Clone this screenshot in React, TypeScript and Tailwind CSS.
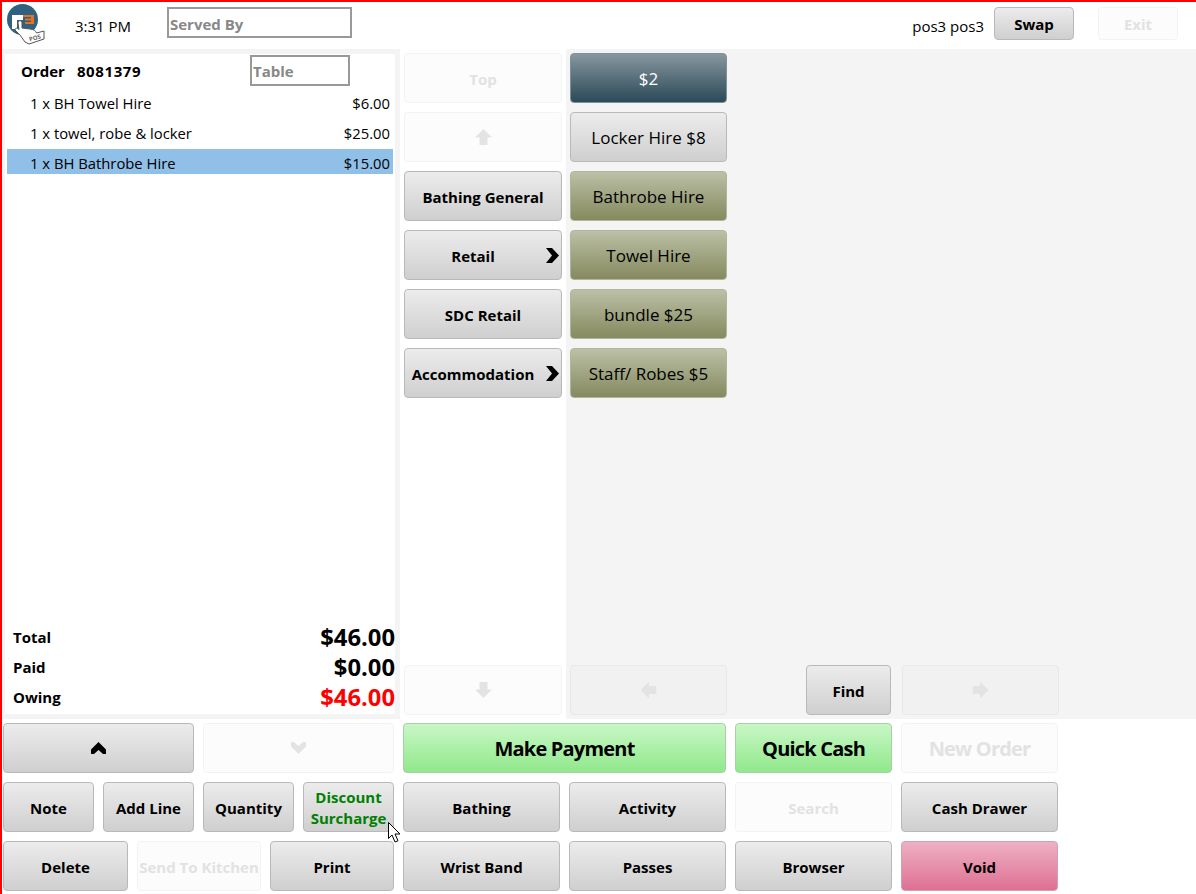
import type { ReactNode } from 'react'

type Kind = 'grey' | 'off' | 'green' | 'pink' | 'slate' | 'olive'

const kinds: Record<Kind, string> = {
  grey: 'border-[#b9b9b9] bg-gradient-to-b from-[#ececec] to-[#cfcfcf] text-black',
  off: 'border-black/[0.04] bg-black/[0.01] text-[#e2e2e2]',
  green: 'border-[#a9cfa6] bg-gradient-to-b from-[#c8f7c5] to-[#90e88c] text-black',
  pink: 'border-[#d0a0b0] bg-gradient-to-b from-[#eeb0c4] to-[#dd7093] text-black',
  slate: 'border-[#7f9098] bg-gradient-to-b from-[#87979f] to-[#2c4a58] text-white',
  olive: 'border-[#b1b59b] bg-gradient-to-b from-[#bcc0a6] to-[#858a5f] text-black',
}

function Btn({ kind = 'grey', className = '', children }: { kind?: Kind; className?: string; children?: ReactNode }) {
  return (
    <div className={`relative flex h-[50px] items-center justify-center rounded-[4px] border pt-[2px] text-center text-[15px] leading-[21px] font-bold ${kinds[kind]} ${className}`}>
      {children}
    </div>
  )
}

function ItemBtn({ kind, children }: { kind: Kind; children: ReactNode }) {
  return (
    <Btn kind={kind} className="w-[157px] !pt-0 !text-[17px] !font-normal">
      {children}
    </Btn>
  )
}

// block arrow, pointing up before rotation
function BlockArrow({ className }: { className: string }) {
  return (
    <svg viewBox="0 0 17 16" className={`h-[16px] w-[17px] fill-[#e3e3e3] ${className}`}>
      <path d="M8.5 0 L17 8.5 H12.5 V16 H4.5 V8.5 H0 Z" />
    </svg>
  )
}

function Chevron({ className, fill }: { className: string; fill: string }) {
  return (
    <svg viewBox="0 0 15 12" className={`h-[12px] w-[15px] ${fill} ${className}`}>
      <path d="M7.5 0 L15 7.5 V12 H12 L7.5 8 L3 12 H0 V7.5 Z" />
    </svg>
  )
}

function SideArrow() {
  return (
    <svg viewBox="0 0 13 15" className="absolute top-[17px] right-[2px] h-[15px] w-[13px]">
      <path d="M0 0 H6 L13 7.5 L6 15 H0 L6 7.5 Z" fill="#000" />
    </svg>
  )
}

function Logo() {
  return (
    <svg viewBox="0 0 40 42" className="h-[42px] w-[40px]">
      <circle cx="15.5" cy="15.5" r="15.5" fill="#2f6180" />
      <path d="M5 25 V11 H16 V16 H10 V25 Z" fill="#fff" />
      <path d="M16 11 H27 V20 H18 V18 H24 V16.5 H18 V14.5 H24 V13 H16 Z" fill="#e8701f" />
      <path d="M11 19 C11 16 15 16 15 19 V24 L23 25 C27 25.5 29 27 29.5 29 L37 27 V35 L22 40 L18 38 L13 31 L8 26 C8 24 10 23.5 12 25.5 Z" fill="#fff" stroke="#555" strokeWidth="1" />
      <text x="22" y="36" fontSize="6" fontWeight="700" fill="#666" transform="rotate(-16 28 34)" fontFamily="Open Sans, sans-serif">POS</text>
    </svg>
  )
}

function MouseCursor() {
  return (
    <svg viewBox="0 0 13 21" className="absolute top-[39px] left-[84px] h-[21px] w-[13px] overflow-visible">
      <path d="M0.5 0.5 V16.5 L4 13 L7 20 L10 18.8 L7 12 H12 Z" fill="#fff" stroke="#000" strokeWidth="1" />
    </svg>
  )
}

function TotalRow({ label, value, red }: { label: string; value: string; red?: boolean }) {
  return (
    <div className="flex h-[30px] items-center justify-between pl-[8px]">
      <span className="mb-[2px] text-[15px] font-bold">{label}</span>
      <span className={`text-[23.8px] font-bold ${red ? 'text-[#ff0000]' : 'text-black'}`}>{value}</span>
    </div>
  )
}

export default function App() {
  const lines = [
    ['1 x BH Towel Hire', '$6.00'],
    ['1 x towel, robe & locker', '$25.00'],
    ['1 x BH Bathrobe Hire', '$15.00'],
  ]

  return (
    <div className="h-[894px] w-[1196px] overflow-hidden border-t-2 border-l-2 border-[#ff0000] bg-white font-['Open_Sans',sans-serif] text-black">
      {/* Top bar */}
      <div className="flex h-[47px] items-start">
        <div className="mt-[2px] ml-[5px] h-[42px] w-[40px]"><Logo /></div>
        <span className="mt-[13px] ml-[28px] w-[92px] text-[15px]">3:31 PM</span>
        <div className="mt-[5px] flex h-[31px] w-[185px] items-center border-2 border-[#999] pt-[4px] pl-[1px] text-[15px] font-bold text-[#888]">Served By</div>
        <span className="mt-[13px] mr-[10px] ml-auto text-[15px]">pos3 pos3</span>
        <Btn className="mt-[5px] !h-[33px] w-[80px]">Swap</Btn>
        <Btn kind="off" className="mt-[5px] mr-[18px] ml-[24px] !h-[33px] w-[80px]">Exit</Btn>
      </div>

      <div className="flex h-[670px]">
        {/* Order panel */}
        <div className="flex w-[398px] bg-[#f4f4f4] pt-[5px] pr-[5px] pb-[5px] pl-[3px]">
          <div className="flex w-[390px] flex-col justify-between bg-white">
            <div>
              <div className="flex h-[35px] items-start">
                <span className="mt-[6px] ml-[16px] w-[229px] text-[15px] font-bold">
                  Order<span className="ml-[12px] tracking-[0.6px]">8081379</span>
                </span>
                <div className="mt-[1px] flex h-[31px] w-[100px] items-center border-2 border-[#999] pt-[2px] pl-[1px] text-[15px] font-bold text-[#888]">Table</div>
              </div>
              <div className="flex flex-col gap-[5px] px-[2px]">
                {lines.map(([name, price], i) => (
                  <div key={name} className={`flex h-[25px] items-center justify-between pt-[3px] pr-[3px] pl-[23px] text-[14.8px] ${i === 2 ? 'bg-[#90bfe8]' : ''}`}>
                    <span>{name}</span>
                    <span>{price}</span>
                  </div>
                ))}
              </div>
            </div>
            <div className="pb-[1px]">
              <TotalRow label="Total" value="$46.00" />
              <TotalRow label="Paid" value="$0.00" />
              <TotalRow label="Owing" value="$46.00" red />
            </div>
          </div>
        </div>

        {/* Category column */}
        <div className="flex w-[166px] flex-col justify-between pt-[4px] pb-[4px] pl-[4px]">
          <div className="flex w-[158px] flex-col gap-[9px]">
            <Btn kind="off">Top</Btn>
            <Btn kind="off" className="!pt-0"><BlockArrow className="" /></Btn>
            <Btn>Bathing General</Btn>
            <Btn className="pr-[20px]">Retail<SideArrow /></Btn>
            <Btn>SDC Retail</Btn>
            <Btn className="pr-[20px]">Accommodation<SideArrow /></Btn>
          </div>
          <Btn kind="off" className="w-[158px] !pt-0"><BlockArrow className="rotate-180" /></Btn>
        </div>

        {/* Item grid */}
        <div className="flex flex-1 flex-col justify-between bg-[#f4f4f4] pt-[4px] pb-[4px] pl-[4px]">
          <div className="flex flex-col gap-[9px]">
            <ItemBtn kind="slate">$2</ItemBtn>
            <ItemBtn kind="grey">Locker Hire $8</ItemBtn>
            <ItemBtn kind="olive">Bathrobe Hire</ItemBtn>
            <ItemBtn kind="olive">Towel Hire</ItemBtn>
            <ItemBtn kind="olive">bundle $25</ItemBtn>
            <ItemBtn kind="olive">Staff/ Robes $5</ItemBtn>
          </div>
          <div className="flex">
            <Btn kind="off" className="w-[157px] !pt-0"><BlockArrow className="-rotate-90" /></Btn>
            <Btn className="ml-[79px] w-[85px]">Find</Btn>
            <Btn kind="off" className="ml-[11px] w-[157px] !pt-0"><BlockArrow className="rotate-90" /></Btn>
          </div>
        </div>
      </div>

      {/* Bottom buttons */}
      <div className="flex gap-[9px] pt-[4px] pl-[1px]">
        <div className="flex w-[391px] flex-col gap-[9px]">
          <div className="flex gap-[9px]">
            <Btn className="w-[191px] !pt-0"><Chevron className="" fill="fill-black" /></Btn>
            <Btn kind="off" className="w-[191px] !pt-0"><Chevron className="rotate-180" fill="fill-[#e3e3e3]" /></Btn>
          </div>
          <div className="flex gap-[9px]">
            <Btn className="w-[91px]">Note</Btn>
            <Btn className="w-[91px]">Add Line</Btn>
            <Btn className="w-[91px]">Quantity</Btn>
            <Btn className="w-[91px] !pt-[1px] !text-[#008000]">
              <div>Discount<br />Surcharge</div>
              <MouseCursor />
            </Btn>
          </div>
          <div className="flex gap-[9px]">
            <Btn className="w-[125px]">Delete</Btn>
            <Btn kind="off" className="w-[124px] whitespace-nowrap">Send To Kitchen</Btn>
            <Btn className="w-[124px]">Print</Btn>
          </div>
        </div>
        <div className="grid w-[655px] grid-cols-[157px_157px_157px_157px] gap-[9px]">
          <Btn kind="green" className="col-span-2 !pt-0 !text-[20px] tracking-[-0.8px]">Make Payment</Btn>
          <Btn kind="green" className="!pt-0 !text-[20px] tracking-[-0.8px]">Quick Cash</Btn>
          <Btn kind="off" className="!pt-0 !text-[20px] tracking-[-0.8px]">New Order</Btn>
          <Btn>Bathing</Btn>
          <Btn>Activity</Btn>
          <Btn kind="off">Search</Btn>
          <Btn>Cash Drawer</Btn>
          <Btn>Wrist Band</Btn>
          <Btn>Passes</Btn>
          <Btn>Browser</Btn>
          <Btn kind="pink">Void</Btn>
        </div>
      </div>
    </div>
  )
}
